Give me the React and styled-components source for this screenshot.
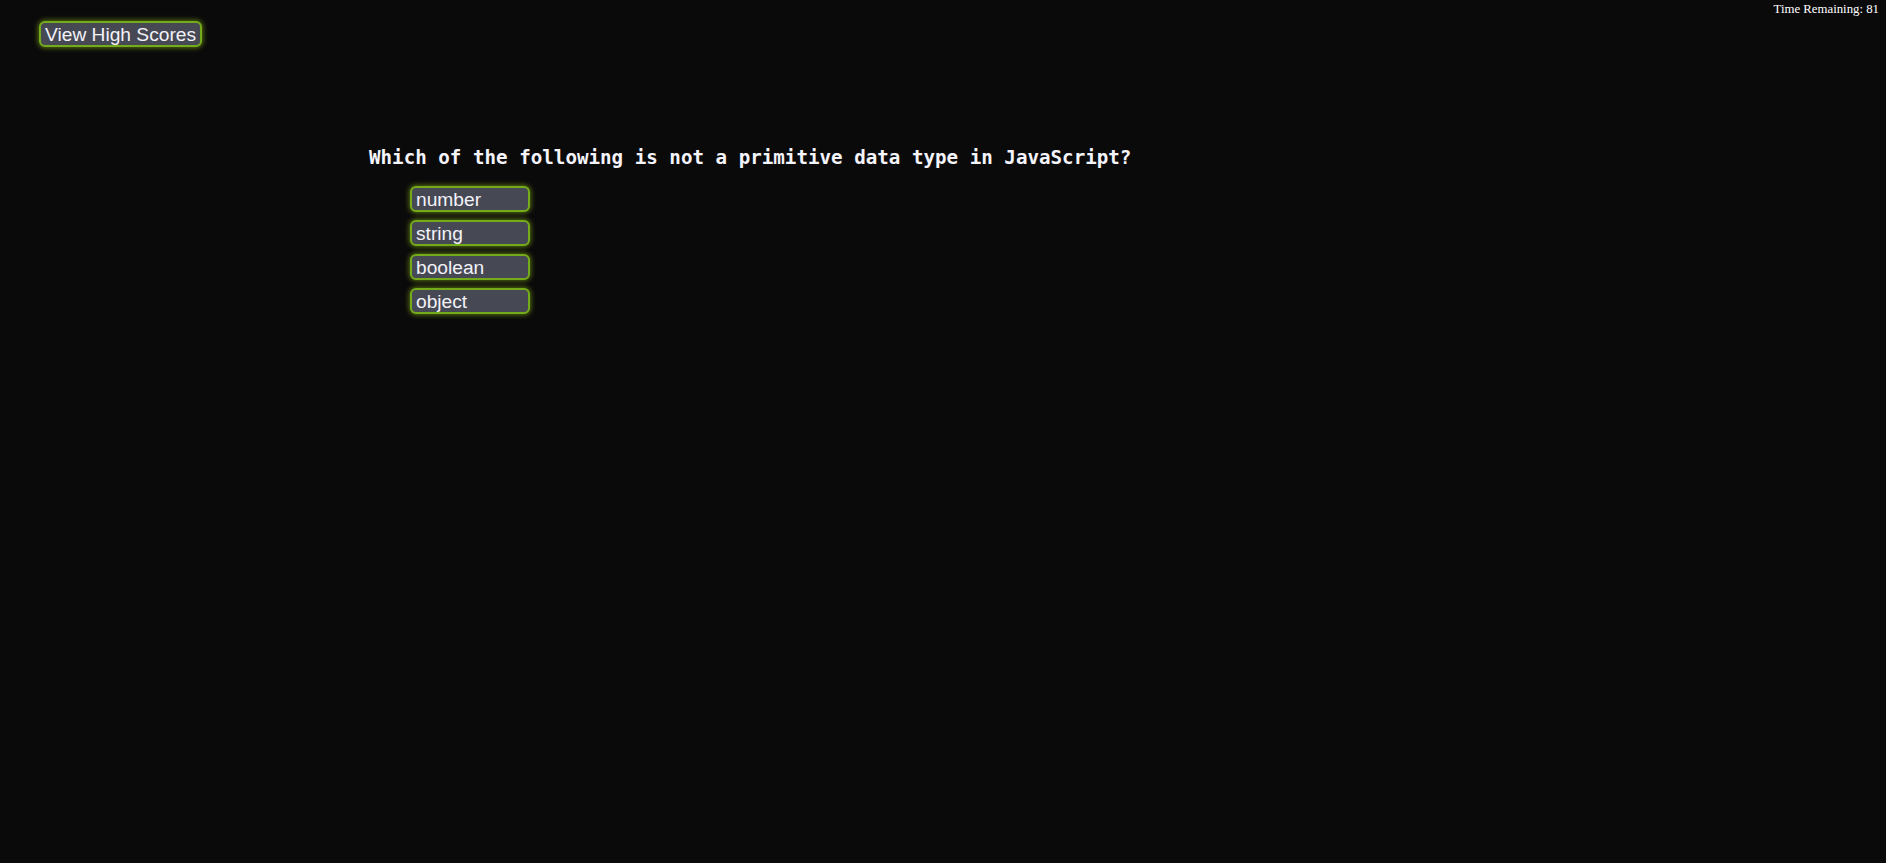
import React from 'react'
import styled, { createGlobalStyle } from 'styled-components'

const GlobalStyle = createGlobalStyle`
	html, body {
		margin: 0;
		padding: 0;
		background: #0b0a0b;
		min-height: 100%;
	}
	body {
		font-family: 'Liberation Serif', serif;
		color: #fff;
	}
`

const Page = styled.div`
	min-height: 863px;
	background: #0b0a0b;
`

const Header = styled.header`
	display: flex;
	justify-content: space-between;
	align-items: flex-start;
	padding: 2px 7px 0 39px;
`

const Timer = styled.div`
	font-family: 'Liberation Serif', serif;
	font-size: 12.8px;
	line-height: 15px;
	color: #fff;
`

const GlowButton = styled.button`
	display: block;
	box-sizing: border-box;
	height: 26px;
	width: ${props => props.width || 'auto'};
	margin: 0;
	padding: 0 4px;
	font-family: 'Liberation Sans', Arial, sans-serif;
	font-size: 19.2px;
	line-height: 21px;
	text-align: left;
	color: #f2f2f8;
	background: #464854;
	border: 2px solid #74ab1a;
	border-radius: 6px;
	box-shadow: 0 0 5px 1px rgba(150, 200, 20, 0.55);
	cursor: pointer;
`

const HighScores = styled(GlowButton)`
	margin-top: 19px;
`

const Quiz = styled.main`
	padding: 100px 0 0 369px;
`

const Question = styled.h2`
	margin: 0;
	font-family: 'DejaVu Sans Mono', 'Liberation Mono', monospace;
	font-size: 19.2px;
	font-weight: bold;
	line-height: 22px;
	color: #f4f4fa;
`

const Choices = styled.div`
	display: flex;
	flex-direction: column;
	gap: 8px;
	margin: 17px 0 0 41px;
`

const choices = ['number', 'string', 'boolean', 'object']

const App = () => {
	return (
		<Page>
			<GlobalStyle />
			<Header>
				<HighScores>View High Scores</HighScores>
				<Timer>Time Remaining: 81</Timer>
			</Header>
			<Quiz>
				<Question>
					Which of the following is not a primitive data type in JavaScript?
				</Question>
				<Choices>
					{choices.map(choice => (
						<GlowButton key={choice} width="120px">
							{choice}
						</GlowButton>
					))}
				</Choices>
			</Quiz>
		</Page>
	)
}

export default App
